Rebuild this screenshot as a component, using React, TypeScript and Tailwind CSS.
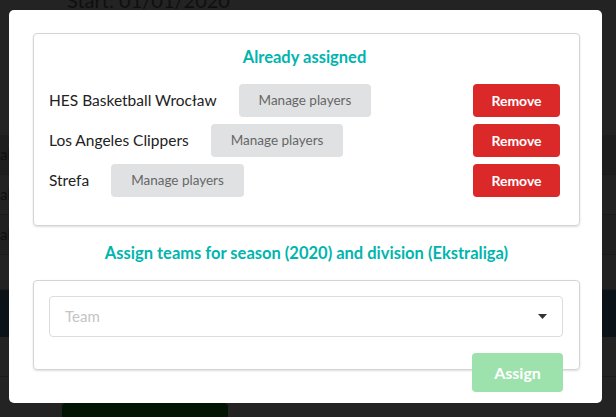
import React from 'react';

const assigned = ['HES Basketball Wrocław', 'Los Angeles Clippers', 'Strefa'];

const App: React.FC = () => {
  return (
    <div className="relative h-[417px] w-[616px] overflow-hidden bg-[#232323] font-['Lato',sans-serif]">
      {/* page behind the dimmer */}
      <div className="flex flex-col">
        <div className="mt-[-12px] h-[24px] pl-[67px] text-[20px] leading-[24px] text-[#0f0f0f]">Start: 01/01/2020</div>
        <div className="mt-[123px] flex flex-col">
          <div className="h-[40px] shrink-0 border-b border-[#1b1b1b] bg-[#1e1e1e] pt-[8px] text-[15px] text-[#0e0e0e]">al</div>
          <div className="h-[40px] shrink-0 border-b border-[#1b1b1b] bg-[#222222] pt-[8px] text-[15px] text-[#0e0e0e]">al</div>
          <div className="h-[40px] shrink-0 border-b border-[#1b1b1b] bg-[#202020] pt-[8px] text-[15px] text-[#0e0e0e]">al</div>
          <div className="h-[35px] shrink-0 border-b border-[#1b1b1b] bg-[#222222]" />
          <div className="h-[47px] shrink-0 bg-[#0c1318]" />
          <div className="h-[40px] shrink-0 border-b border-[#1b1b1b] bg-[#232323]" />
        </div>
        <div className="ml-[62px] mt-[26px] h-[20px] w-[166px] shrink-0 rounded-[4px] bg-[#021402]" />
      </div>

      {/* modal */}
      <div className="absolute left-[9px] top-[10px] h-[393px] w-[593px] rounded-[5px] bg-white pl-[24px] pt-[23px]">
        <div className="w-[547px] rounded-[4px] border border-[#d4d4d5] pb-[28px] pl-[15px] pr-[19px] pt-[13px] shadow-[0_1px_2px_rgba(34,36,38,0.15)]">
          <div className="h-[20px] text-center text-[16.5px] font-bold leading-[20px] text-[#00b5ad]">Already assigned</div>
          <div className="mt-[17px] flex flex-col gap-[7px]">
            {assigned.map(name => (
              <div key={name} className="flex h-[33px] shrink-0 items-center">
                <span className="text-[15.5px] text-[#222222]">{name}</span>
                <button className="ml-[22px] h-[33px] rounded-[4px] bg-[#e0e1e2] px-[20px] text-[13.5px] text-[#666666]">
                  Manage players
                </button>
                <button className="ml-auto h-[33px] w-[87px] rounded-[4px] bg-[#db2828] text-[14px] font-bold text-white">
                  Remove
                </button>
              </div>
            ))}
          </div>
        </div>

        <div className="mt-[17px] h-[20px] w-[547px] text-center text-[16.5px] font-bold leading-[20px] text-[#00b5ad]">
          Assign teams for season (2020) and division (Ekstraliga)
        </div>

        <div className="mt-[17px] w-[547px] rounded-[4px] border border-[#d4d4d5] pl-[15px] pr-[16px] pt-[15px] shadow-[0_1px_2px_rgba(34,36,38,0.15)]">
          <div className="flex h-[41px] items-center rounded-[4px] border border-[#dcdcdd] pl-[15px] pr-[15px]">
            <span className="text-[15px] text-[#c4c4c4]">Team</span>
            <svg className="ml-auto" width="9" height="5" viewBox="0 0 9 5">
              <path d="M0 0 L9 0 L4.5 5 Z" fill="#333333" />
            </svg>
          </div>
          <div className="relative z-10 mb-[-23px] mt-[16px] flex justify-end">
            <button className="h-[39px] w-[91px] rounded-[4px] bg-[#9de1ac] text-[16px] font-bold text-white">Assign</button>
          </div>
        </div>
      </div>
    </div>
  );
};

export default App;
